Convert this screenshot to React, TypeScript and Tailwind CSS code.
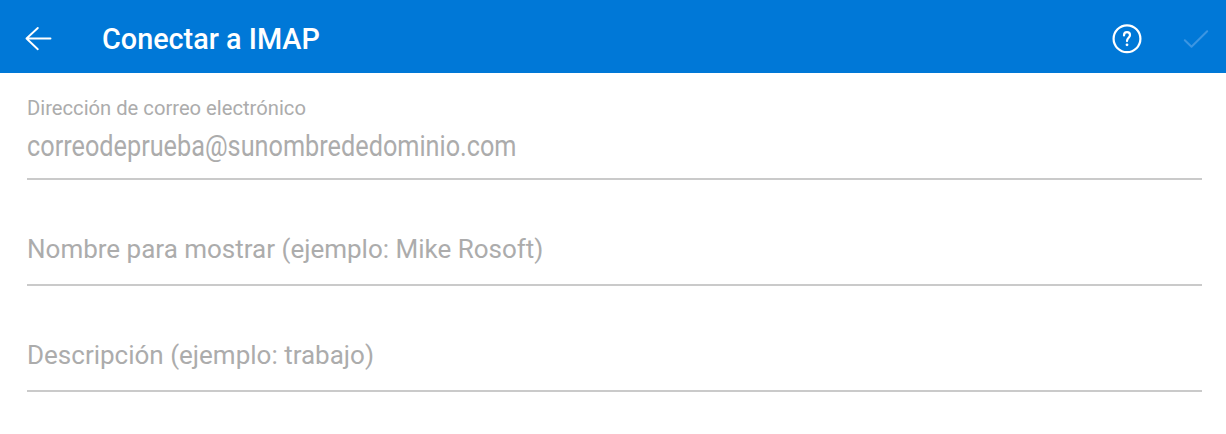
import React from 'react';

interface Field {
  id: string;
  label?: string;
  text: string;
}

const FIELDS: Field[] = [
  { id: 'email', label: 'Dirección de correo electrónico', text: 'correodeprueba@sunombrededominio.com' },
  { id: 'name', text: 'Nombre para mostrar (ejemplo: Mike Rosoft)' },
  { id: 'description', text: 'Descripción (ejemplo: trabajo)' },
];

const BackIcon: React.FC = () => (
  <svg width="28" height="26" viewBox="0 0 28 26" fill="none" stroke="currentColor" strokeWidth="1.9" strokeLinecap="round" strokeLinejoin="round">
    <path d="M26.5 12.5H2.5M13.8 2L2.5 12.5l11.3 10.7" />
  </svg>
);

const HelpIcon: React.FC = () => (
  <svg width="30" height="30" viewBox="0 0 30 30" fill="none" stroke="currentColor" strokeWidth="2.2" strokeLinecap="round">
    <circle cx="15" cy="14.7" r="13.4" />
    <path d="M12 11.4c0-2.1 1.2-3.3 3-3.3s3 1.2 3 3c0 2.6-3 3-3 6" />
    <circle cx="15" cy="20.8" r="1.4" fill="currentColor" stroke="none" />
  </svg>
);

const CheckIcon: React.FC = () => (
  <svg width="26" height="20" viewBox="0 0 26 20" fill="none" stroke="currentColor" strokeWidth="2" strokeLinecap="round" strokeLinejoin="round">
    <path d="M1.8 11.3l6.7 6.5L24.2 2.2" />
  </svg>
);

const App: React.FC = () => {
  return (
    <div className="h-[434px] w-full overflow-hidden bg-white font-['Roboto',sans-serif]">
      <header className="flex h-[73px] items-center bg-[#0078d7] pt-1 pr-[17px] pl-6 text-white">
        <BackIcon />
        <h1 className="ml-[50px] text-[28.8px] leading-8 font-medium whitespace-nowrap">Conectar a IMAP</h1>
        <div className="ml-auto flex items-center gap-[41px]">
          <HelpIcon />
          <span className="text-[#3c96e2]">
            <CheckIcon />
          </span>
        </div>
      </header>

      <main className="flex flex-col pr-6 pl-[27px] text-[#acacac]">
        {FIELDS.map((field) =>
          field.label ? (
            <div key={field.id} className="h-[107px] border-b-2 border-[#cacaca] pt-[23px]">
              <div className="text-[20.2px] leading-6 whitespace-nowrap">{field.label}</div>
              {/* filled-in value is set narrower than the hints */}
              <div className="mt-2.5 origin-left scale-x-[0.842] text-[30px] leading-8 whitespace-nowrap">{field.text}</div>
            </div>
          ) : (
            <div key={field.id} className="h-[106px] border-b-2 border-[#cacaca] pt-[53px]">
              <div className="text-[26px] leading-8 whitespace-nowrap">{field.text}</div>
            </div>
          )
        )}
      </main>
    </div>
  );
};

export default App;
